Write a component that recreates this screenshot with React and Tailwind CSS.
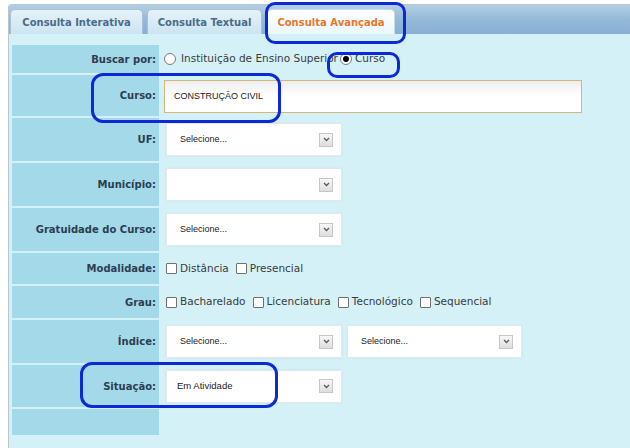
import React from 'react';

const Chevron = () => (
  <span className="flex h-[14px] w-[14px] items-center justify-center border border-[#c6c6c6] bg-gradient-to-b from-[#f7f7f7] to-[#dedede]">
    <svg width="7" height="5" viewBox="0 0 7 5">
      <polyline points="1,1 3.5,3.5 6,1" fill="none" stroke="#5a5a5a" strokeWidth="1.3" />
    </svg>
  </span>
);

function Select({ text, w = 'w-[176px]', pl = 'pl-[13px]', size = 'text-[9px]' }) {
  return (
    <div className={`${w} ${pl} flex h-[33px] items-center justify-between border border-[#e1e7ea] bg-white pr-[8px] shadow-[0_0_2px_rgba(0,0,0,0.06)]`}>
      <span className={`${size} text-[#222]`} style={{ fontFamily: '"Liberation Sans", Arial, sans-serif' }}>{text}</span>
      <Chevron />
    </div>
  );
}

function Check({ label }) {
  return (
    <span className="flex items-center gap-[3px]">
      <span className="h-[11px] w-[11px] rounded-[1px] border border-[#707070] bg-white" />
      <span>{label}</span>
    </span>
  );
}

function Row({ label, h, children }) {
  return (
    <div className="flex" style={{ height: h }}>
      <div className="flex w-[147px] shrink-0 items-center justify-end bg-[#a3d9e9] pr-[3px] text-[10px] font-bold text-[#2c3e50]">
        {label}
      </div>
      <div className="flex flex-1 items-center pl-[5px] text-[10.5px] text-[#3a3a3a]">{children}</div>
    </div>
  );
}

export default function App() {
  const tab = 'flex h-[25px] items-center justify-center rounded-t-[5px] border border-b-0 text-[10px] font-bold';
  return (
    <div className="relative h-[448px] w-[630px] overflow-hidden bg-white" style={{ fontFamily: '"DejaVu Sans", Verdana, sans-serif' }}>
      <div className="ml-[8px] mt-[4px] h-[444px] overflow-hidden rounded-tl-[4px] border-l border-t border-[#b9c6cf] bg-[#d5f1f8]">
        {/* abas */}
        <div className="flex h-[29px] items-end gap-[4px] bg-gradient-to-b from-[#b3cfe5] via-[#94b9d9] to-[#88b0d3] pl-[1px]">
          <div className={`${tab} w-[133px] border-[#a7c2d6] bg-gradient-to-b from-[#e6f2f8] to-[#cbe5f1] text-[#4a6b8b]`}>Consulta Interativa</div>
          <div className={`${tab} w-[115px] border-[#a7c2d6] bg-gradient-to-b from-[#e6f2f8] to-[#cbe5f1] text-[#4a6b8b]`}>Consulta Textual</div>
          <div className={`${tab} ml-[1px] w-[128px] border-[#c9dde8] bg-gradient-to-b from-[#ffffff] to-[#eaf8fc] text-[#e8772b]`}>Consulta Avançada</div>
        </div>

        {/* formulário */}
        <div className="flex flex-col gap-[2px] pl-[3px] pt-[11px]">
          <Row label="Buscar por:" h={28}>
            <span className="flex items-center">
              <span className="h-[12px] w-[12px] rounded-full border border-[#7a7a7a] bg-white" />
              <span className="ml-[5px]">Instituição de Ensino Superior</span>
              <span className="ml-[2px] flex h-[12px] w-[12px] items-center justify-center rounded-full border border-[#7a7a7a] bg-white">
                <span className="h-[6px] w-[6px] rounded-full bg-black" />
              </span>
              <span className="ml-[3px]">Curso</span>
            </span>
          </Row>
          <Row label="Curso:" h={41}>
            <div className="mt-[2px] flex h-[33px] w-[418px] items-center border border-[#d3b67a] bg-gradient-to-b from-[#eeeeee] via-white to-white pl-[9px]">
              <span className="text-[9px] text-[#222]" style={{ fontFamily: '"Liberation Sans", Arial, sans-serif' }}>CONSTRUÇÃO CIVIL</span>
            </div>
          </Row>
          <Row label="UF:" h={43}>
            <div className="ml-[2px]"><Select text="Selecione..." /></div>
          </Row>
          <Row label="Município:" h={43}>
            <div className="ml-[2px]"><Select text="" /></div>
          </Row>
          <Row label="Gratuidade do Curso:" h={43}>
            <div className="ml-[2px]"><Select text="Selecione..." /></div>
          </Row>
          <Row label="Modalidade:" h={31}>
            <div className="ml-[2px] flex items-center gap-[7px]">
              <Check label="Distância" />
              <Check label="Presencial" />
            </div>
          </Row>
          <Row label="Grau:" h={32}>
            <div className="ml-[2px] flex items-center gap-[7px]">
              <Check label="Bacharelado" />
              <Check label="Licenciatura" />
              <Check label="Tecnológico" />
              <Check label="Sequencial" />
            </div>
          </Row>
          <Row label="Índice:" h={43}>
            <div className="ml-[2px] flex gap-[5px]">
              <Select text="Selecione..." />
              <Select text="Selecione..." w="w-[175px]" />
            </div>
          </Row>
          <Row label="Situação:" h={42}>
            <div className="ml-[2px]"><Select text="Em Atividade" pl="pl-[10px]" size="text-[9.5px]" /></div>
          </Row>
          <Row label="" h={26} />
        </div>
      </div>

      {/* marcações em azul */}
      <div className="absolute left-[265px] top-[2px] h-[42px] w-[141px] rounded-[10px] border-[3px] border-[#0b2ad6]" />
      <div className="absolute left-[327px] top-[52px] h-[26px] w-[73px] rounded-[10px] border-[3px] border-[#0b2ad6]" />
      <div className="absolute left-[91px] top-[73px] h-[50px] w-[190px] rounded-[12px] border-[3px] border-[#0b2ad6]" />
      <div className="absolute left-[80px] top-[362px] h-[46px] w-[198px] rounded-[12px] border-[3px] border-[#0b2ad6]" />
    </div>
  );
}
